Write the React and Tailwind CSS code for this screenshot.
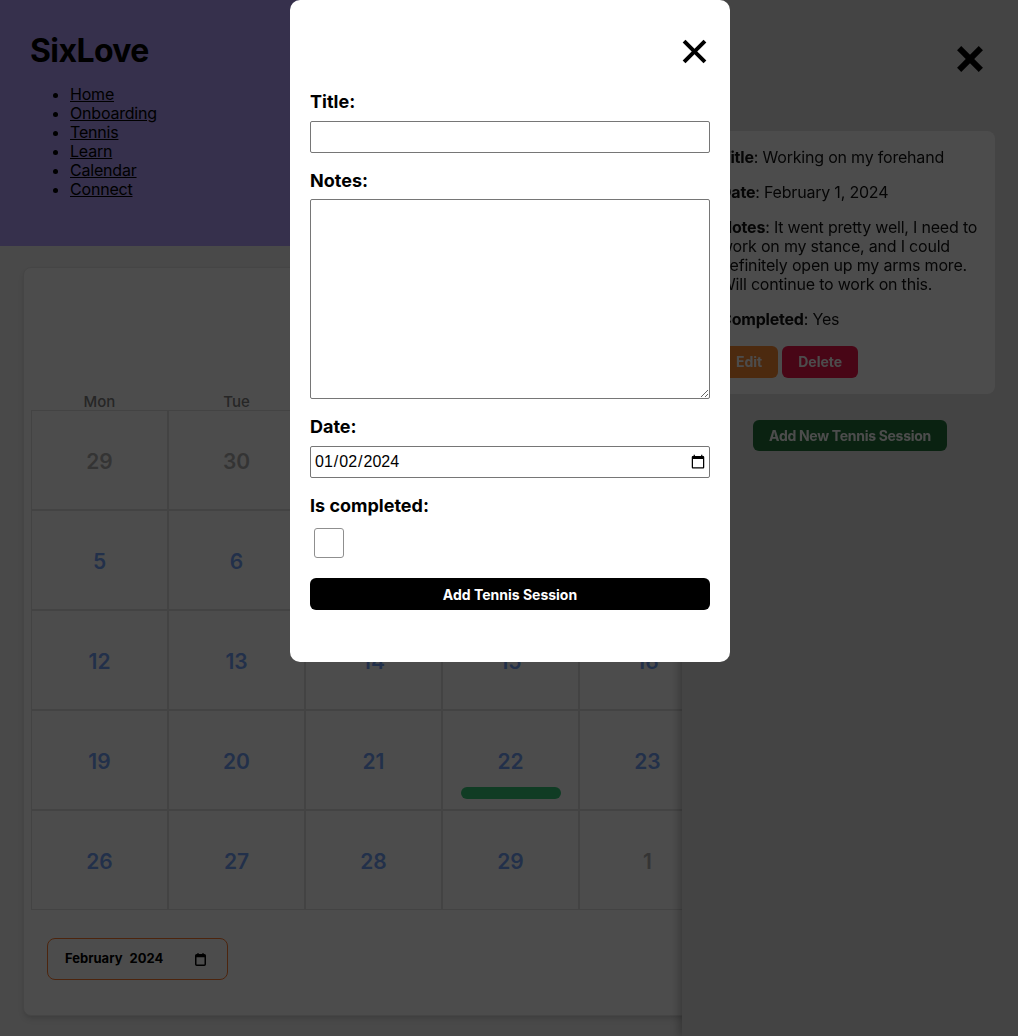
import React from "react"

const weekDays = ["Mon", "Tue", "Wed", "Thu", "Fri", "Sat", "Sun"]

const navLinks = ["Home", "Onboarding", "Tennis", "Learn", "Calendar", "Connect"]

// Feb 2024, weeks starting on Monday
const days = [
  { n: 29, out: true },
  { n: 30, out: true },
  { n: 31, out: true },
  ...Array.from({ length: 29 }, (_, i) => ({ n: i + 1, session: i + 1 === 1 || i + 1 === 22 })),
  { n: 1, out: true },
  { n: 2, out: true },
  { n: 3, out: true },
]

function CloseIcon({ size, stroke }) {
  return (
    <svg width={size} height={size} viewBox="0 0 24 24" fill="none" stroke="black" strokeWidth={stroke}>
      <line x1="2" y1="2" x2="22" y2="22" />
      <line x1="22" y1="2" x2="2" y2="22" />
    </svg>
  )
}

function CalendarIcon() {
  return (
    <svg width="11" height="13" viewBox="0 0 11 13" fill="none" stroke="black">
      <rect x="0.75" y="1.75" width="9.5" height="10.5" rx="1" strokeWidth="1.5" />
      <rect x="0.75" y="1.75" width="9.5" height="2.5" fill="black" strokeWidth="0" />
      <line x1="3" y1="0" x2="3" y2="2" strokeWidth="1.2" />
      <line x1="8" y1="0" x2="8" y2="2" strokeWidth="1.2" />
    </svg>
  )
}

function Header() {
  return (
    <header className="h-[246px] bg-[#b4a0ff] pl-[30px] pt-[35px]">
      <h1 className="text-[32px] leading-[32px] font-bold text-black tracking-[-0.6px]">SixLove</h1>
      <ul className="mt-[17.5px] list-disc pl-10 text-base leading-[19px] tracking-[-0.2px]">
        {navLinks.map((link) => (
          <li key={link}>
            <a href="#" className="text-black underline">
              {link}
            </a>
          </li>
        ))}
      </ul>
    </header>
  )
}

function Calendar() {
  return (
    <div className="ml-[23px] mt-[21px] w-[975px] rounded-lg border border-[#e6e6e6] bg-white px-[7px] pt-[124px] pb-[35px] shadow-md">
      <div className="grid grid-cols-[repeat(7,137px)] h-[18px]">
        {weekDays.map((d) => (
          <div key={d} className="text-center text-[15px] leading-[20px] font-medium text-[#808080]">
            {d}
          </div>
        ))}
      </div>
      <div className="grid grid-cols-[repeat(7,137px)]">
        {days.map((day, i) => (
          <div key={i} className="flex h-[100px] flex-col items-center border border-[#e2e2e2] pt-[39px]">
            <span className={`text-[21px] leading-[24px] font-semibold ${day.out ? "text-[#b0b0b0]" : "text-[#74a2f8]"}`}>
              {day.n}
            </span>
            {day.session && <div className="mt-[13px] h-3 w-[100px] rounded-full bg-[#37c97a]" />}
          </div>
        ))}
      </div>
      <div className="pl-4 pt-[28px]">
        <div className="flex h-[42px] w-[181px] items-center rounded-lg border border-[#ff7a2e] pl-[17px] pr-[21px] text-[13px] font-bold text-black">
          <span>February</span>
          <span className="ml-[7px]">2024</span>
          <span className="ml-auto flex">
            <CalendarIcon />
          </span>
        </div>
      </div>
    </div>
  )
}

function SessionDrawer() {
  return (
    <aside className="fixed top-0 right-0 h-full w-[336px] bg-[#e4e4e4] shadow-[-3px_0_8px_rgba(0,0,0,0.25)]">
      <div className="flex justify-end pt-[46px] pr-[35px]">
        <button>
          <CloseIcon size={26} stroke={5.5} />
        </button>
      </div>
      <div className="ml-[18px] mt-[59px] w-[295px] rounded-lg bg-white pl-5 pr-[14px] pt-[17px] pb-4 text-base leading-[19px] tracking-[-0.2px] text-[#111]">
        <p>
          <b>Title</b>: Working on my forehand
        </p>
        <p className="mt-4">
          <b>Date</b>: February 1, 2024
        </p>
        <p className="mt-4">
          <b>Notes</b>: It went pretty well, I need to work on my stance, and I could definitely open up my arms more. Will
          continue to work on this.
        </p>
        <p className="mt-4">
          <b>Completed</b>: Yes
        </p>
        <div className="mt-[17px] flex gap-1 tracking-normal">
          <button className="h-8 rounded-md bg-[#ff8c35] px-4 text-sm font-bold text-white">Edit</button>
          <button className="h-8 rounded-md bg-[#f0174b] px-4 text-sm font-bold text-white">Delete</button>
        </div>
      </div>
      <div className="mt-[26px] flex justify-center">
        <button className="h-[31px] rounded-md bg-[#23743a] px-4 text-sm font-bold tracking-[-0.3px] text-white">
          Add New Tennis Session
        </button>
      </div>
    </aside>
  )
}

function SessionModal() {
  return (
    <div className="fixed top-0 left-[290px] w-[440px] rounded-[10px] bg-white px-5 pt-[39px] pb-[52px] text-black">
      <div className="flex h-6 justify-end pr-[3px]">
        <button>
          <CloseIcon size={25} stroke={3.8} />
        </button>
      </div>
      <form className="flex flex-col">
        <label className="mt-[28px] text-lg leading-[22px] font-bold">Title:</label>
        <input type="text" className="mt-2 h-8 rounded-[2px] border border-[#767676] px-1" />
        <label className="mt-[17px] text-lg leading-[22px] font-bold">Notes:</label>
        <textarea className="mt-[7px] h-[200px] rounded-[2px] border border-[#767676]" />
        <label className="mt-[17px] text-lg leading-[22px] font-bold">Date:</label>
        <input
          type="date"
          defaultValue="2024-01-02"
          className="mt-2 h-8 rounded-[2px] border border-[#767676] pl-[3px] pr-[1px] font-['Liberation_Sans',sans-serif] text-base"
        />
        <label className="mt-[17px] text-lg leading-[22px] font-bold">Is completed:</label>
        <input
          type="checkbox"
          className="mt-[11px] ml-1 h-[30px] w-[30px] appearance-none rounded-[3px] border border-[#8f8f8f] bg-white"
        />
        <button type="button" className="mt-5 h-8 rounded-md bg-black text-sm leading-[34px] font-bold text-white">
          Add Tennis Session
        </button>
      </form>
    </div>
  )
}

export default function App() {
  return (
    <div className="relative min-h-screen bg-[#f3f3f3] pb-10 font-['Inter',sans-serif]">
      <Header />
      <Calendar />
      <SessionDrawer />
      <div className="fixed inset-0 bg-black/70" />
      <SessionModal />
    </div>
  )
}
